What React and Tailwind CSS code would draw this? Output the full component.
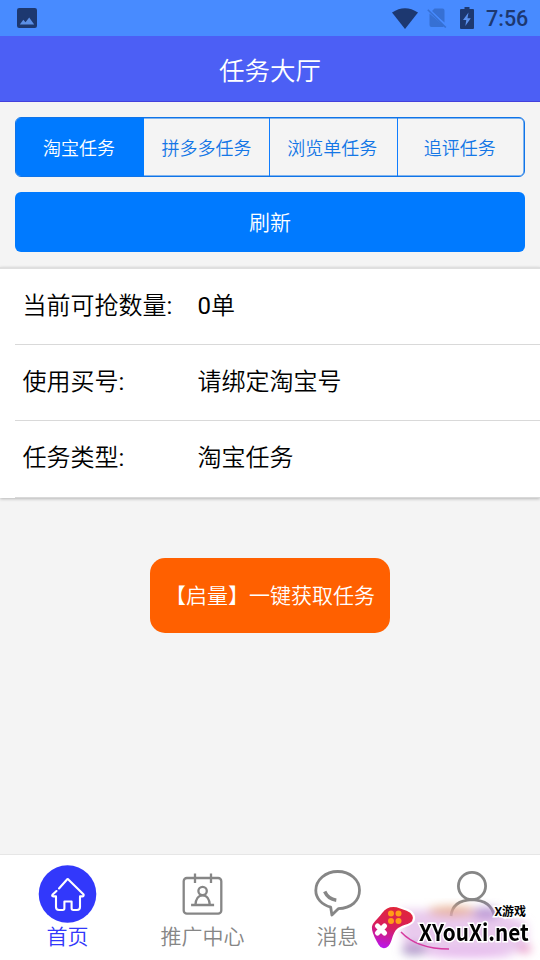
import React from 'react'

const tabs = ['淘宝任务', '拼多多任务', '浏览单任务', '追评任务']

const rows = [
  { label: '当前可抢数量', count: 0, value: '单' },
  { label: '使用买号', value: '请绑定淘宝号' },
  { label: '任务类型', value: '淘宝任务' },
]

const HomeIcon = () => (
  <svg width="60" height="60" viewBox="0 0 60 60" fill="none">
    <circle cx="29.5" cy="30" r="28.8" fill="#3238fb" />
    <path
      d="M21 24.5 L28.800 15.700 Q29.700 14.600 30.600 15.700 L45.600 30.500 Q46 32.400 44.300 32.400 L42 32.400 L42 43 Q42 46 39 46 L35.300 46 Q33.600 46 33.600 44.300 L33.600 37.500 L26.400 37.500 L26.400 44.300 Q26.400 46 24.700 46 L21 46 Q18 46 18 43 L18 32.400 L15.500 32.400 Q13.300 32 14.700 30.500 L18.500 27"
      stroke="#fff"
      strokeWidth="2.100"
      strokeLinecap="round"
      strokeLinejoin="round"
    />
  </svg>
)

const PromoIcon = () => (
  <svg width="60" height="60" viewBox="0 0 60 60" fill="none" stroke="#868686" strokeWidth="2.300">
    <rect x="10.700" y="14" width="37.600" height="35.600" rx="3.200" />
    <path d="M22 9.500v9.500M38 9.500v9.500" />
    <circle cx="29.600" cy="27" r="4.200" />
    <path d="M18.100 41h23M22.400 41c.3-5.800 3-9.700 7.200-9.700s6.900 3.900 7.200 9.700" />
  </svg>
)

const MessageIcon = () => (
  <svg width="60" height="60" viewBox="0 0 60 60" fill="none" stroke="#868686">
    <path
      d="M23.900 51 L22.700 43.200 C13.800 40.800 7.800 34.300 7.800 26.500 C7.800 16 17.500 7.500 29.700 7.500 C42.200 7.500 51.500 16 51.500 26.300 C51.500 37 43 44.300 30.300 44.700 Z"
      strokeWidth="2.800"
      strokeLinejoin="round"
    />
    <path d="M16.700 27.500 Q20 35 28.300 36.200" strokeWidth="3.500" />
  </svg>
)

const UserIcon = () => (
  <svg width="60" height="60" viewBox="0 0 60 60" fill="none" stroke="#868686" strokeWidth="2.800">
    <circle cx="29" cy="22" r="13.600" />
    <path d="M8 52 Q9.500 36.500 29 35.700 Q48.500 36.500 51 52" />
  </svg>
)

// the last tab's caption sits behind the badge, so it has none
const navItems = [
  { id: 'home', label: '首页', icon: HomeIcon, active: true },
  { id: 'promo', label: '推广中心', icon: PromoIcon },
  { id: 'message', label: '消息', icon: MessageIcon },
  { id: 'user', icon: UserIcon },
]

const StatusBar = () => (
  <div className="flex h-9 items-center justify-between bg-[#488bff] pr-3 pl-[17px] text-[#1d3870]">
    <svg width="20" height="20" viewBox="0 0 20 20">
      <rect width="20" height="20" rx="2.200" fill="currentColor" />
      <path d="M2.800 16.400 L6.300 11.800 L8.500 14.300 L12.200 9.600 L17.200 16.400Z" fill="#5b8fe6" />
    </svg>
    <div className="flex items-center">
      <svg width="26" height="21" viewBox="0 0 26 21" className="mr-[9px]">
        <path d="M0 4.500 Q13 -4 26 4.500 L13 21Z" fill="currentColor" />
      </svg>
      <svg width="20" height="20" viewBox="0 0 20 20" className="mr-[13px]">
        <path d="M7.500 .5 H15.500 Q17.500 .5 17.500 2.500 V14.500 L4.500 3.500Z" fill="#3670d4" />
        <path d="M2.500 5.500 L17 18 Q16.500 19 15.500 19 H4.500 Q2.500 19 2.500 17Z" fill="#3670d4" />
        <path d="M1.800 .8 L19.800 18.500" stroke="#488bff" strokeWidth="1.400" />
        <path d="M.8 1.800 L18.800 19.500" stroke="#3670d4" strokeWidth="1.600" />
      </svg>
      <svg width="14" height="22" viewBox="0 0 14 22" className="mr-[12px]">
        <path d="M4.500 0h5v2H13q1 0 1 1v18q0 1-1 1H1q-1 0-1-1V3q0-1 1-1h3.500z" fill="currentColor" />
        <path d="M8.500 5.500 L3 13h3.300L5.300 19 L10.800 11.200H7.500z" fill="#5b91ed" />
      </svg>
      <span className="w-[42px] pt-px font-[Roboto,sans-serif] text-[21.500px] leading-9 font-medium whitespace-nowrap">7:56</span>
    </div>
  </div>
)

const Gamepad = () => (
  <svg width="48" height="50" viewBox="0 0 48 50" className="shrink-0">
    <defs>
      <linearGradient id="pad" x1="0.600" y1="0" x2="0.350" y2="1">
        <stop offset="0" stopColor="#e12638" />
        <stop offset="0.500" stopColor="#d91e5b" />
        <stop offset="1" stopColor="#b816f0" />
      </linearGradient>
    </defs>
    <path
      d="M12.500 9 C16 4 21 2 28 3.200 L38 6.800 C44.500 9 46.500 14.500 44 18.500 C41 23 33 22.500 28.500 27 C23.500 32 24.500 40 20 44 C16 47.800 11 46.500 8.500 42 C5.500 36.500 1.500 31 1.800 24 C2.200 18 9 15 12.500 9Z"
      fill="url(#pad)"
      stroke="#fff"
      strokeWidth="2.200"
    />
    <g fill="#ff9c18">
      <circle cx="22" cy="10.500" r="3" />
      <circle cx="29.500" cy="10.500" r="3" />
      <circle cx="22" cy="18" r="3" />
      <circle cx="29.500" cy="18" r="3" />
    </g>
    <path d="M8.500 23 L15.500 30 M15.500 23 L8.500 30" stroke="#fff" strokeWidth="5.200" strokeLinecap="round" />
  </svg>
)

const Watermark = () => (
  <div className="absolute right-0 bottom-0 h-[62px] w-[171px] overflow-hidden">
    <svg width="171" height="62" viewBox="0 0 171 62" className="absolute inset-0">
      <defs>
        <filter id="soft" x="-30%" y="-50%" width="160%" height="200%">
          <feGaussianBlur stdDeviation="5" />
        </filter>
      </defs>
      <g filter="url(#soft)">
        <path d="M30 12 H130 L158 26 V54 H36Z" fill="#e0b3e6" opacity=".7" />
        <ellipse cx="83" cy="13" rx="24" ry="5" fill="#e4a37a" opacity=".75" />
        <ellipse cx="117" cy="15" rx="13" ry="6" fill="#9e77c4" opacity=".65" />
        <ellipse cx="45" cy="52" rx="13" ry="6" fill="#8f7bb5" opacity=".6" />
        <ellipse cx="100" cy="56" rx="45" ry="4" fill="#d88fe6" opacity=".6" />
        <ellipse cx="156" cy="51" rx="7" ry="4" fill="#e77fb5" opacity=".7" />
      </g>
      <path d="M32 34 Q48 51 80 51" fill="none" stroke="#d63aa0" strokeWidth="1.500" />
    </svg>
    <div className="relative flex pt-[5px]">
      <Gamepad />
      <div className="ml-[2px] flex w-[110px] flex-col text-black [paint-order:stroke_fill] [-webkit-text-stroke:3px_white]">
        <span className="mr-[3px] self-end pt-[2px] text-[12px] leading-[14px] font-bold whitespace-nowrap">X游戏</span>
        <span className="origin-left scale-x-[0.9] font-['Noto_Sans_CJK_SC',sans-serif] text-[23px] leading-[24px] font-bold whitespace-nowrap">XYouXi.net</span>
      </div>
    </div>
  </div>
)

const App = () => {
  return (
    <div className="relative flex h-[960px] w-[540px] flex-col overflow-hidden bg-[#f4f4f4] font-[Roboto,'Noto_Sans_CJK_SC',sans-serif] font-[350]">
      <StatusBar />
      <header className="flex h-[66px] items-center justify-center border-b border-[#4340dc] bg-[#4c5ff5] pt-1.5 text-[25.500px] text-white">
        任务大厅
      </header>

      <div className="px-[15px] pt-[15px]">
        <div className="flex h-[60px] overflow-hidden rounded-[6px] border border-[#0f74e8] shadow-[inset_0_0_0_0.5px_#0f74e8]">
          {tabs.map((tab, i) => (
            <button
              key={tab}
              className={
                i === 0
                  ? 'w-32 bg-[#007aff] pt-1 pr-0.5 text-lg text-white'
                  : i === 1
                    ? 'w-[125px] pt-1 text-lg text-[#1477e6]'
                    : 'flex-1 border-l border-[#0f7dff] pt-1 pr-0.5 text-lg text-[#1477e6]'
              }
            >
              {tab}
            </button>
          ))}
        </div>
        <button className="mt-[15px] h-[60px] w-full rounded-[6px] bg-[#007aff] pt-1 text-[21px] text-white">刷新</button>
      </div>

      <div className="mt-[15px] border-t-2 border-[#dfdfdf] bg-white shadow-[0_1px_3px_rgba(0,0,0,0.25)]">
        {rows.map(({ label, count, value }) => (
          <div key={label} className="ml-[15px] flex h-[76.200px] items-center border-b border-[#d9d9d9] pb-px pl-[7.500px] text-2xl text-black">
            <span className="w-[175px]">
              {label}
              <span className="font-normal">:</span>
            </span>
            <span>
              <span className="font-normal">{count}</span>
              {value}
            </span>
          </div>
        ))}
      </div>

      <button className="mt-[60px] h-[75px] w-60 self-center rounded-[15px] bg-[#ff6000] pt-1 text-[21px] whitespace-nowrap text-white">
        【启量】一键获取任务
      </button>

      <nav className="mt-auto flex h-[106px] border-t border-[#e6e6e6] bg-white">
        {navItems.map(({ id, label, icon: Icon, active }) => (
          <div key={id} className="flex flex-1 flex-col items-center pt-[9px]">
            <Icon />
            {label && (
              <span className={active ? 'text-[21px] leading-[26px] text-[#3238fb]' : 'text-[21px] leading-[26px] text-[#868686]'}>
                {label}
              </span>
            )}
          </div>
        ))}
      </nav>
      <Watermark />
    </div>
  )
}

export default App
